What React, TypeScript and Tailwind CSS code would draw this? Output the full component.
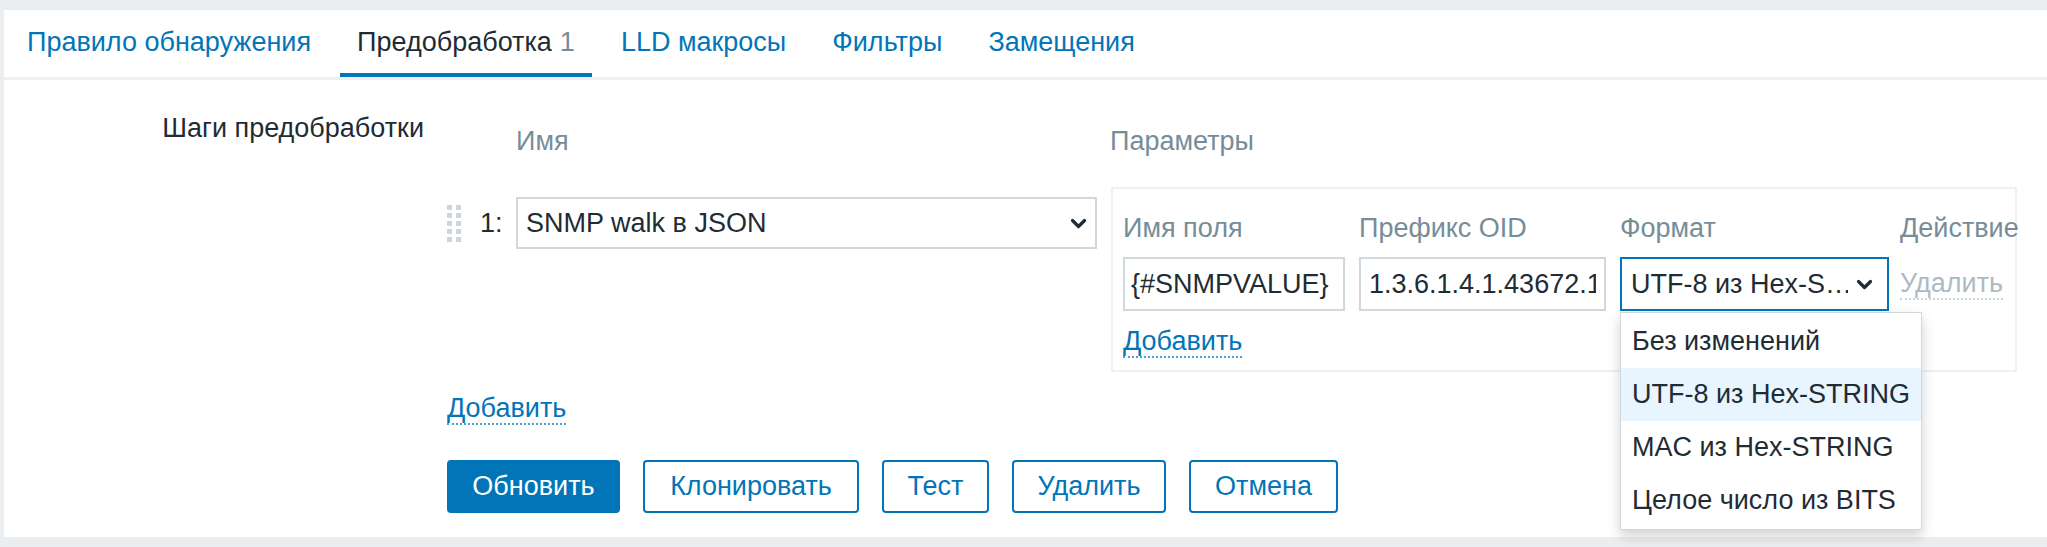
import { useState } from "react";

const tabs = [
  { label: "Правило обнаружения" },
  { label: "Предобработка", count: 1, active: true },
  { label: "LLD макросы" },
  { label: "Фильтры" },
  { label: "Замещения" },
];

const formats = ["Без изменений", "UTF-8 из Hex-STRING", "MAC из Hex-STRING", "Целое число из BITS"];

const buttons = [
  { label: "Обновить", w: "w-[173px]", main: true },
  { label: "Клонировать", w: "w-[216px]" },
  { label: "Тест", w: "w-[107px]" },
  { label: "Удалить", w: "w-[154px]" },
  { label: "Отмена", w: "w-[149px]" },
];

function Chevron() {
  return (
    <svg width="17" height="11" viewBox="0 0 17 11" fill="none">
      <path d="M2.5 2.5l6 6 6-6" stroke="#1f2c33" strokeWidth="3.2" strokeLinecap="round" strokeLinejoin="round" />
    </svg>
  );
}

function DragHandle() {
  return (
    <div className="grid grid-cols-2 gap-x-[4px] gap-y-[3px] w-[14px]">
      {Array.from({ length: 10 }).map((_, i) => (
        <span key={i} className="block w-[5px] h-[5px] bg-[#cdd5d9]" />
      ))}
    </div>
  );
}

export default function App() {
  const [hovered] = useState(1);

  return (
    <div className="min-h-[547px] bg-[#ebeef0] pt-[10px] pb-[10px] pl-[4px] font-['Liberation_Sans',Arial,sans-serif] text-[27px] text-[#1f2c33]">
      <div className="bg-white h-[527px] flex flex-col">
        {/* tabs */}
        <nav className="flex pl-[6px] gap-[12px] border-b-[3px] border-[#eef0f2]">
          {tabs.map((t) => (
            <div
              key={t.label}
              className={`h-[67px] pt-[2px] px-[17px] flex items-center border-b-4 whitespace-nowrap ${
                t.active ? "border-[#0275b8] text-[#1f2c33]" : "border-transparent text-[#0275b8]"
              }`}
            >
              {t.label}
              {t.count !== undefined && <span className="ml-[8px] text-[#768d99]">{t.count}</span>}
            </div>
          ))}
        </nav>

        {/* form */}
        <div className="flex">
          <div className="w-[420px] shrink-0 text-right pt-[33px] leading-[31px]">Шаги предобработки</div>

          <div className="ml-[23px] pt-[46px] flex flex-col items-start">
            <div className="flex h-[31px] leading-[31px] text-[#768d99]">
              <div className="w-[69px] shrink-0" />
              <div className="w-[594px] shrink-0">Имя</div>
              <div>Параметры</div>
            </div>

            <div className="mt-[30px] flex items-start">
              <div className="mt-[10px] h-[52px] flex items-center">
                <div className="w-[33px]">
                  <DragHandle />
                </div>
                <div className="w-[36px]">1:</div>
                <div className="w-[581px] h-[52px] border-2 border-[#cfd8dc] flex items-center justify-between pl-[8px] pr-[8px]">
                  <span>SNMP walk в JSON</span>
                  <Chevron />
                </div>
              </div>

              <div className="ml-[14px] w-[906px] border-2 border-[#eef0f2] px-[10px] pt-[24px] pb-[12px]">
                <div className="flex h-[31px] leading-[31px] text-[#768d99] whitespace-nowrap">
                  <div className="w-[222px] shrink-0">Имя поля</div>
                  <div className="w-[247px] ml-[14px] shrink-0">Префикс OID</div>
                  <div className="w-[269px] ml-[14px] shrink-0">Формат</div>
                  <div className="ml-[11px] shrink-0">Действие</div>
                </div>

                <div className="mt-[13px] flex h-[54px] items-center">
                  <input
                    readOnly
                    value="{#SNMPVALUE}"
                    className="w-[222px] h-[54px] border-2 border-[#cfd8dc] px-[6px] outline-none text-[#1f2c33]"
                  />
                  <input
                    readOnly
                    value="1.3.6.1.4.1.43672.1.1.2"
                    className="ml-[14px] w-[247px] h-[54px] border-2 border-[#cfd8dc] px-[8px] outline-none text-[#1f2c33]"
                  />
                  <div className="relative ml-[14px] w-[269px] h-[54px] border-2 border-[#0275b8] flex items-center pl-[9px] pr-[14px] gap-[8px]">
                    <span className="flex-1 min-w-0 whitespace-nowrap overflow-hidden">UTF-8 из Hex-S…</span>
                    <Chevron />
                    <ul className="absolute left-[-2px] top-[calc(100%+3px)] w-[302px] z-10 bg-white border border-[#cfd8dc] py-[2px] shadow-[0_6px_12px_rgba(0,0,0,0.18)]">
                      {formats.map((f, i) => (
                        <li
                          key={f}
                          className={`h-[53px] pl-[11px] flex items-center whitespace-nowrap ${
                            i === hovered ? "bg-[#e8f5ff]" : ""
                          }`}
                        >
                          {f}
                        </li>
                      ))}
                    </ul>
                  </div>
                  <span className="ml-[11px] leading-[29px] text-[#acbbc2] border-b-2 border-dotted border-[#c9d3d8]">
                    Удалить
                  </span>
                </div>

                <div className="mt-[16px] flex">
                  <span className="leading-[29px] text-[#0275b8] border-b-2 border-dotted border-[#0275b8]/70">Добавить</span>
                </div>
              </div>
            </div>

            <div className="mt-[22px] flex">
              <span className="leading-[29px] text-[#0275b8] border-b-2 border-dotted border-[#0275b8]/70">Добавить</span>
            </div>

            <div className="mt-[35px] flex gap-[23px]">
              {buttons.map((b) => (
                <button
                  key={b.label}
                  className={`${b.w} h-[53px] rounded-[4px] border-2 border-[#0275b8] ${
                    b.main ? "bg-[#0275b8] text-white" : "bg-white text-[#0275b8]"
                  }`}
                >
                  {b.label}
                </button>
              ))}
            </div>
          </div>
        </div>
      </div>
    </div>
  );
}
